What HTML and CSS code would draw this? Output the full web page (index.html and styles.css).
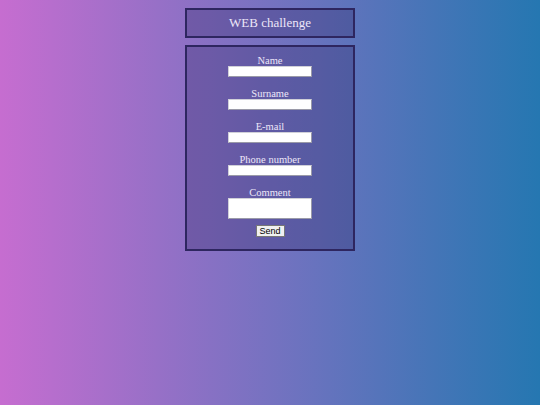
FILE: index.html
```html
<!DOCTYPE html>
<html>
<head>
<meta charset="utf-8">
<link rel="stylesheet" href="styles.css">
</head>
<body>
<div class="page">
  <header class="box title">WEB challenge</header>
  <form class="box form">
    <div class="field"><label>Name</label><input class="inp" type="text"></div>
    <div class="field"><label>Surname</label><input class="inp" type="text"></div>
    <div class="field"><label>E-mail</label><input class="inp" type="text"></div>
    <div class="field"><label>Phone number</label><input class="inp" type="text"></div>
    <div class="field"><label>Comment</label><textarea class="inp area"></textarea></div>
    <button class="send" type="button">Send</button>
  </form>
</div>
</body>
</html>
```
FILE: styles.css
```css
html, body {
  margin: 0;
  height: 100%;
}
body {
  background: linear-gradient(to right, #c66dd0, #2577b1);
  font-family: "Liberation Serif", serif;
  color: #ece6f8;
}
.page {
  display: flex;
  flex-direction: column;
  align-items: center;
  padding-top: 8px;
  gap: 7px;
}
.box {
  width: 166px;
  border: 2px solid #2e2660;
  background: rgba(45, 35, 100, 0.3);
  box-sizing: content-box;
}
.title {
  height: 26px;
  display: flex;
  align-items: center;
  justify-content: center;
  font-size: 13px;
}
.form {
  margin: 0;
  display: flex;
  flex-direction: column;
  align-items: center;
  padding: 7px 0 12px;
}
.field {
  display: flex;
  flex-direction: column;
  align-items: center;
  margin-bottom: 10px;
}
.field label {
  display: block;
  font-size: 10.5px;
  line-height: 10px;
  padding-top: 2px;
}
.inp {
  width: 84px;
  height: 11px;
  box-sizing: border-box;
  margin: 0;
  padding: 0;
  border: 1px solid #9a9aa8;
  border-top-color: #d0d0d8;
  border-left-color: #d0d0d8;
  background: #fff;
}
.area {
  height: 21px;
  resize: none;
  display: block;
}
.field:nth-child(5) {
  margin-bottom: 6px;
}
.send {
  width: 29px;
  height: 12px;
  padding: 0;
  font-family: "Liberation Sans", sans-serif;
  font-size: 9px;
  line-height: 10px;
  background: #f0f0f0;
  border: 1px solid #777;
  color: #000;
}
```
